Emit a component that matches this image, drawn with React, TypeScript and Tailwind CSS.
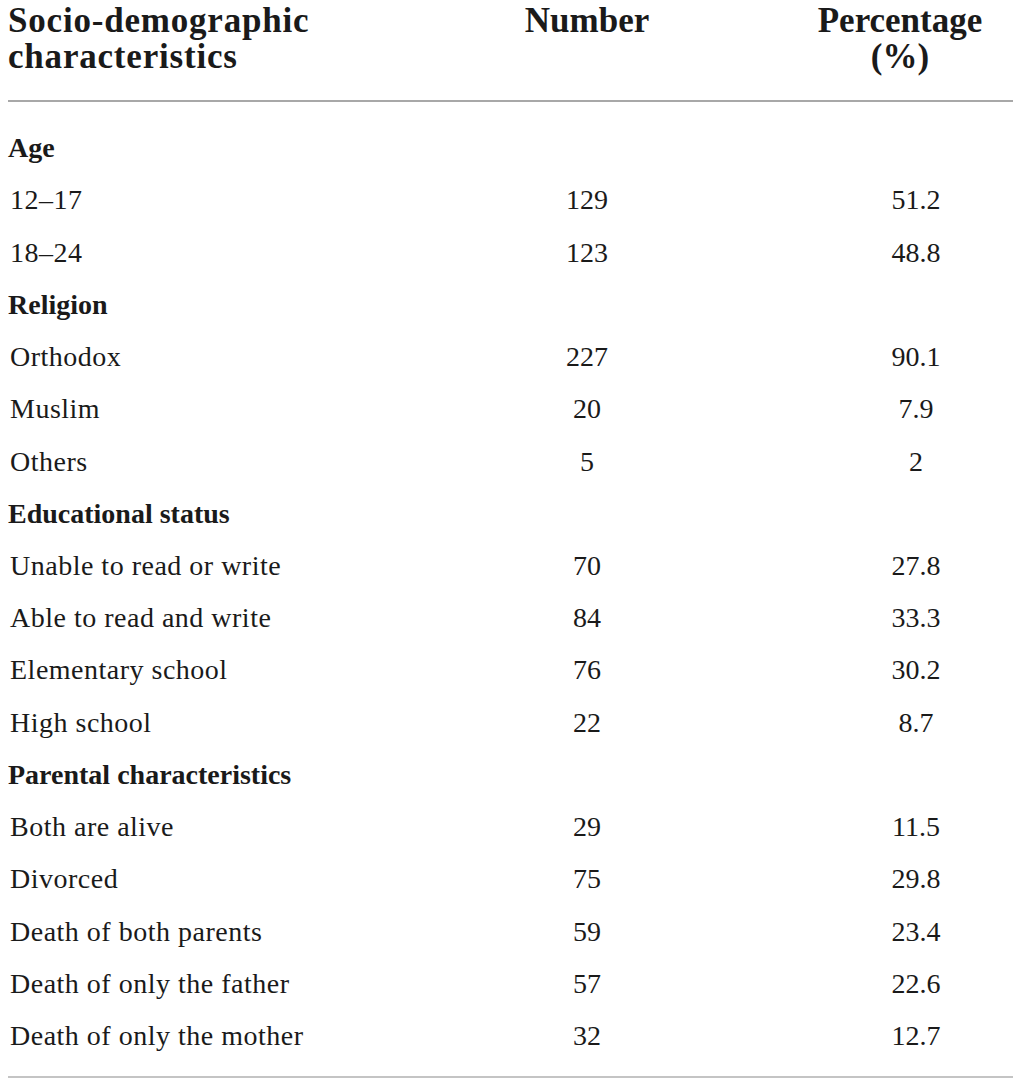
import React from "react";

type Row = { label: string; n?: string; pct?: string; section?: boolean };

const rows: Row[] = [
  { label: "Age", section: true },
  { label: "12–17", n: "129", pct: "51.2" },
  { label: "18–24", n: "123", pct: "48.8" },
  { label: "Religion", section: true },
  { label: "Orthodox", n: "227", pct: "90.1" },
  { label: "Muslim", n: "20", pct: "7.9" },
  { label: "Others", n: "5", pct: "2" },
  { label: "Educational status", section: true },
  { label: "Unable to read or write", n: "70", pct: "27.8" },
  { label: "Able to read and write", n: "84", pct: "33.3" },
  { label: "Elementary school", n: "76", pct: "30.2" },
  { label: "High school", n: "22", pct: "8.7" },
  { label: "Parental characteristics", section: true },
  { label: "Both are alive", n: "29", pct: "11.5" },
  { label: "Divorced", n: "75", pct: "29.8" },
  { label: "Death of both parents", n: "59", pct: "23.4" },
  { label: "Death of only the father", n: "57", pct: "22.6" },
  { label: "Death of only the mother", n: "32", pct: "12.7" },
];

export default function App() {
  return (
    <div className="w-[1021px] h-[1083px] bg-white text-[#1a1a1a] font-['Liberation_Serif',serif]">
      <div className="mx-[8px] pt-[3px]">
        {/* header */}
        <div className="grid grid-cols-[350px_458px_200px] pb-[25px] border-b-2 border-[#a8a8a8] text-[35px] leading-[36px] font-bold">
          <div className="tracking-[0.8px]">
            Socio-demographic
            <br />
            characteristics
          </div>
          <div className="text-center">Number</div>
          <div className="text-center pr-[32px]">
            Percentage
            <br />
            (%)
          </div>
        </div>

        {/* body */}
        <div className="pt-[20px] pb-[14px] border-b-2 border-[#c4c4c4]">
          {rows.map((r) => (
            <div
              key={r.label}
              className="grid grid-cols-[350px_458px_200px] h-[52.24px] items-center text-[28px] leading-none"
            >
              {r.section ? (
                <div className="font-bold">{r.label}</div>
              ) : (
                <>
                  <div className="pl-[2px] tracking-[0.5px]">{r.label}</div>
                  <div className="text-center">{r.n}</div>
                  <div className="text-center">{r.pct}</div>
                </>
              )}
            </div>
          ))}
        </div>
      </div>
    </div>
  );
}
